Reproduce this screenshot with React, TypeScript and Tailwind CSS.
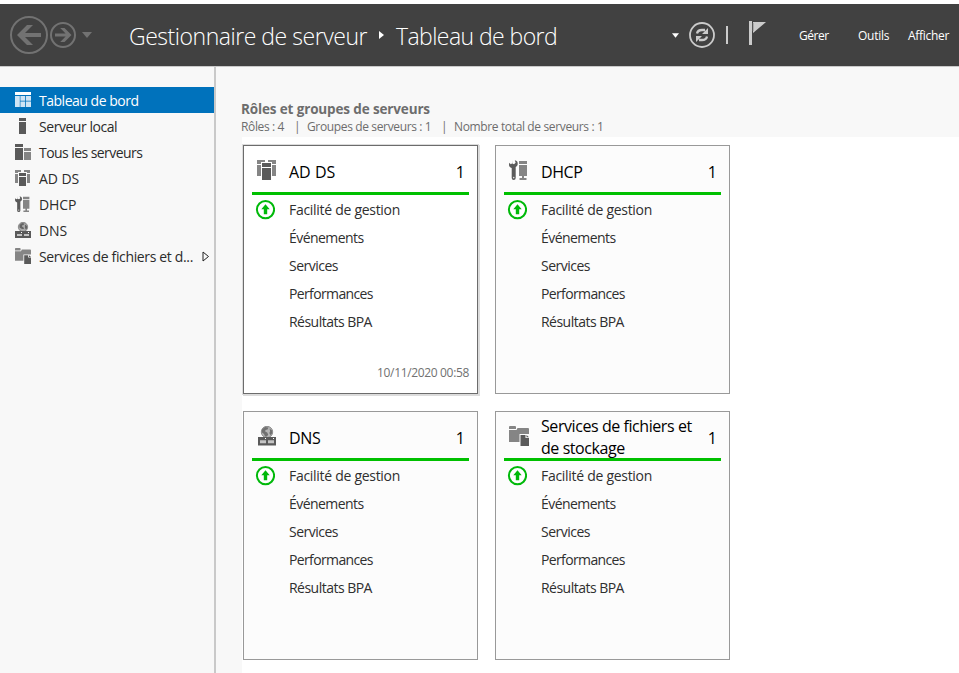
import type { ReactNode } from "react";

type IconProps = { className: string };

function DashboardIcon({ className }: IconProps) {
  return (
    <svg viewBox="0 0 16 16" className={className}>
      <path d="M0 0h16v3H0z" fill="#fff" />
      <path d="M0 4h4.800v11H0zM5.400 4h4.800v4.800H5.400zM5.400 9.600h4.800V15H5.400zM11 4h5v4.800h-5zM11 9.600h5V15h-5z" fill="#cfe4f4" />
    </svg>
  );
}

function LocalServerIcon({ className }: IconProps) {
  return (
    <svg viewBox="0 0 16 16" className={className} shapeRendering="crispEdges">
      <path d="M4 0h7v3H4zM4 4h7v12H4z" fill="#5a5a5a" />
    </svg>
  );
}

function AllServersIcon({ className }: IconProps) {
  return (
    <svg viewBox="0 0 16 16" className={className} shapeRendering="crispEdges">
      <path d="M0 0h8v3H0zM0 4h8v12H0z" fill="#5a5a5a" />
      <path d="M9 4h7v3H9zM9 8h7v8H9z" fill="#858585" />
    </svg>
  );
}

function SmallAdIcon({ className }: IconProps) {
  return (
    <svg viewBox="0 0 16 16" className={className} shapeRendering="crispEdges">
      <path d="M0 0h6v2H3v1H0zM0 4h3v9H0zM9 0h6v3h-3V2H9zM12 4h3v9h-3z" fill="#858585" />
      <path d="M4 3h7v3H4zM4 7h7v9H4z" fill="#5a5a5a" />
    </svg>
  );
}

function AdIcon({ className }: IconProps) {
  return (
    <svg viewBox="0 0 20 20" className={className} shapeRendering="crispEdges">
      <path d="M0 0h8v2H4v2H0zM0 5h4v11H0zM11 0h8v4h-4V2h-4zM15 5h4v11h-4z" fill="#858585" />
      <path d="M5 3h9v4H5zM5 8h9v12H5z" fill="#5a5a5a" />
    </svg>
  );
}

function DhcpIcon({ className }: IconProps) {
  return (
    <svg viewBox="0 0 20 20" className={className}>
      <path d="M10 1h8v3h-8zM10 5h8v11h-8zM13 16h2v2h-2zM10.500 18h7v2h-7z" fill="#858585" />
      <path
        d="M3.200 0v3.400l1.800.8 1.600-1.400L5.800.3C8 .6 9 2.300 8.700 4.300 8.500 5.600 7.700 6.500 6.700 6.900V18a2 2 0 0 1-4 0V8C1 7.600 0 6.300 0 4.700 0 4 .2 3.300.5 2.800l1.200 1.400L3 3.400z"
        fill="#5a5a5a"
      />
      <circle cx="4.700" cy="17.600" r=".8" fill="#ddd" />
    </svg>
  );
}

function DnsIcon({ className }: IconProps) {
  return (
    <svg viewBox="0 0 20 20" className={className}>
      <circle cx="10" cy="6" r="5.700" fill="#b5b5b5" stroke="#777" strokeWidth=".8" />
      <path d="M5 3.500 8 1l3.500.4-1 2-2 .6-.3 1.600 2 .8 1 2-1.200 2.200H8L7 8 5 6.500zM12.500 2.500l2.500 2v3l-1.500 1.800L12.300 7l.9-1.800z" fill="#707070" />
      <path d="M1 11h18v8.500H1z" fill="#5a5a5a" />
      <path d="M3 14.200h6v3H3zM11 14.200h6v3h-6z" fill="#c4c4c4" />
      <path d="M8 12h1v1H8zM16 12h1v1h-1z" fill="#fff" />
    </svg>
  );
}

function SmallDnsIcon({ className }: IconProps) {
  return (
    <svg viewBox="0 0 16 16" className={className}>
      <circle cx="8" cy="5" r="4.700" fill="#aaa" stroke="#707070" strokeWidth=".7" />
      <path d="M4.500 3 7 1l2.500.4-1 1.600-1.500.6v1l1.500.8.500 1.600H7L4.500 5.500zM10 2.500l2 1.500v2.500l-1.200 1L10 6z" fill="#666" />
      <path d="M0 9h16v7H0z" fill="#5a5a5a" />
      <path d="M2 12h5v2H2zM9 12h5v2H9z" fill="#c4c4c4" />
      <path d="M6 10h1v1H6zM13 10h1v1h-1z" fill="#fff" />
    </svg>
  );
}

function FilesIcon({ className }: IconProps) {
  return (
    <svg viewBox="0 0 20 20" className={className}>
      <path d="M0 1q0-1 1-1h5q1 0 1 1v2H0zM0 4h7.500l1-2H19q1 0 1 1v5H10.500v8H0z" fill="#858585" />
      <path d="M11.500 9h5v3H20v8h-8.500z" fill="#5a5a5a" />
      <path d="M17.500 9 20 11.200h-2.500z" fill="#5a5a5a" />
    </svg>
  );
}

function StatusIcon() {
  return (
    <svg viewBox="0 0 20 20" className="h-5 w-5">
      <circle cx="10.500" cy="9.600" r="8.600" fill="#fff" stroke="#00b90a" strokeWidth="2" />
      <path d="M10.500 4.300 14.700 9.300h-2.500v5h-3.400v-5H6.300z" fill="#00b90a" />
    </svg>
  );
}

function Header() {
  return (
    <header className="flex h-[62px] shrink-0 items-center bg-[#414141] text-white">
      <svg viewBox="0 0 96 40" className="ml-[9px] h-10 w-24" fill="none" stroke="#727272">
        <circle cx="20" cy="20" r="18" strokeWidth="2" />
        <path d="M8 20l10-10h6l-8 8h16v4H16l8 8h-6z" fill="#727272" stroke="none" />
        <circle cx="54" cy="20" r="12" strokeWidth="2" />
        <path d="M62.500 20l-7 7h-4.300l5.400-5.600H46v-2.800h10.600L51.200 13h4.300z" fill="#727272" stroke="none" />
        <path d="M73 17h10l-5 6z" fill="#727272" stroke="none" />
      </svg>
      <div className="ml-[24px] flex items-center pt-px text-[23px] leading-[32px] font-light whitespace-nowrap">
        <span className="w-[239px] tracking-[-0.47px]">Gestionnaire de serveur</span>
        <svg viewBox="0 0 5 8" className="mb-px ml-[11px] h-2 w-[5px]">
          <path d="M0 0l5 4-5 4z" fill="#fff" />
        </svg>
        <span className="ml-[12px] w-[162px] tracking-[-0.57px]">Tableau de bord</span>
      </div>
      <svg viewBox="0 0 8 5" className="ml-[114px] h-[5px] w-[7px]">
        <path d="M0 0h8L4 5z" fill="#fff" />
      </svg>
      <svg viewBox="0 0 26 26" className="ml-[10px] h-[26px] w-[26px]" fill="none" stroke="#cbcbcb">
        <circle cx="13" cy="13" r="12" strokeWidth="1.800" />
        <path d="M8 11.500C8.500 9 10.500 8 13 8h3M18 14.500C17.500 17 15.500 18 13 18h-3" strokeWidth="2.300" />
        <path d="M19 6v6h-6zM7 20v-6h6z" fill="#cbcbcb" stroke="none" />
      </svg>
      <div className="ml-[11px] h-[18px] w-[2px] bg-[#cbcbcb]" />
      <svg viewBox="0 0 18 24" className="mb-[4px] ml-[21px] h-6 w-[18px]">
        <path d="M0 0h3v24H0zM4 1h13L4 12z" fill="#cbcbcb" />
        <path d="M4 2v8" stroke="#777" strokeWidth=".8" />
      </svg>
      <nav className="ml-[32px] flex pt-px text-[12px] leading-4 whitespace-nowrap">
        <span className="w-[59px] tracking-[-0.45px]">Gérer</span>
        <span className="w-[50px] tracking-[-0.28px]">Outils</span>
        <span className="tracking-[-0.3px]">Afficher</span>
      </nav>
    </header>
  );
}

const navItems = [
  { label: "Serveur local", icon: LocalServerIcon, tracking: "tracking-[-0.45px]" },
  { label: "Tous les serveurs", icon: AllServersIcon, tracking: "tracking-[-0.56px]" },
  { label: "AD DS", icon: SmallAdIcon, tracking: "tracking-[-0.05px]" },
  { label: "DHCP", icon: DhcpIcon, tracking: "tracking-[-0.1px]" },
  { label: "DNS", icon: SmallDnsIcon, tracking: "tracking-[-0.1px]" },
];

function NavRow({ icon, children }: { icon: ReactNode; children: ReactNode }) {
  return (
    <li className="flex h-[26px] items-center pl-[15px] whitespace-nowrap">
      <span className="mr-2 flex">{icon}</span>
      {children}
    </li>
  );
}

function Sidebar() {
  return (
    <aside className="w-[216px] shrink-0 border-r-2 border-[#c9c9c9] bg-[#f8f8f8] pt-5">
      <ul className="text-[14px] leading-[24px] text-[#2b2b2b]">
        <li className="flex h-[26px] items-center bg-[#0072bc] pl-[15px] whitespace-nowrap text-white">
          <DashboardIcon className="mr-2 h-4 w-4" />
          <span className="pt-[2px] tracking-[-0.48px]">Tableau de bord</span>
        </li>
        {navItems.map(({ label, icon: Icon, tracking }) => (
          <NavRow key={label} icon={<Icon className="h-4 w-4" />}>
            <span className={`pt-[2px] ${tracking}`}>{label}</span>
          </NavRow>
        ))}
        <NavRow icon={<FilesIcon className="h-4 w-4" />}>
          <span className="w-[155px] pt-[2px] tracking-[-0.35px]">Services de fichiers et d...</span>
          <svg viewBox="0 0 8 11" className="ml-[8px] h-[11px] w-2" fill="none" stroke="#222">
            <path d="M1 1 6.500 5.500 1 10z" />
          </svg>
        </NavRow>
      </ul>
    </aside>
  );
}

const metrics = [
  { label: "Facilité de gestion", tracking: "tracking-[-0.29px]", ok: true },
  { label: "Événements", tracking: "tracking-[-0.55px]" },
  { label: "Services", tracking: "tracking-[-0.5px]" },
  { label: "Performances", tracking: "tracking-[-0.63px]" },
  { label: "Résultats BPA", tracking: "tracking-[-0.52px]" },
];

type CardProps = { title: string; icon: ReactNode; titleClass: string; date?: string };

function RoleCard({ title, icon, titleClass, date }: CardProps) {
  return (
    <section
      className={
        date
          ? "flex h-[249px] w-[235px] flex-col border border-[#6c6c6c] bg-white px-2 shadow-[0_0_0_1px_#dcdcdc,1px_1px_0_1px_#dcdcdc]"
          : "flex h-[249px] w-[235px] flex-col border border-[#999] bg-[#fcfcfc] px-2"
      }
    >
      <div className="flex h-[46px] items-center">
        <span className="w-[37px] pt-[2px] pl-[5px]">{icon}</span>
        <h2 className={`w-[160px] text-[16px] leading-[22px] text-black ${titleClass}`}>{title}</h2>
        <span className="w-[16px] pt-[5px] text-right text-[16px] leading-[22px] text-black">1</span>
      </div>
      <div className="h-[3px] shrink-0 bg-[#00c000]" />
      <ul className="mt-px text-[14px] leading-[28px] text-[#2f2f2f]">
        {metrics.map((m) => (
          <li key={m.label} className="flex h-7 items-center">
            <span className="flex w-[37px] pl-[3px]">{m.ok && <StatusIcon />}</span>
            <span className={m.tracking}>{m.label}</span>
          </li>
        ))}
      </ul>
      {date && (
        <time className="mt-auto pb-[12px] text-right text-[12px] leading-4 tracking-[-0.34px] text-[#717171]">
          {date}
        </time>
      )}
    </section>
  );
}

export default function App() {
  return (
    <div className="flex h-[673px] w-[959px] flex-col overflow-hidden bg-white pt-1 font-['Open_Sans',sans-serif]">
      <Header />
      <div className="flex min-h-0 flex-1 border-t border-[#c9c9c9]">
        <Sidebar />
        <main className="flex flex-1 flex-col bg-[#f8f8f8] pl-[26px]">
          <div className="-ml-px h-[70px] shrink-0 pt-[33px] whitespace-nowrap text-[#6d6d6d]">
            <h1 className="text-[13.5px] leading-[18px] font-bold tracking-[-0.14px]">Rôles et groupes de serveurs</h1>
            <div className="flex text-[12px] leading-[17px] tracking-[-0.36px]">
              <span className="w-[53px]">Rôles : 4</span>
              <span className="w-[13px]">|</span>
              <span className="w-[134px]">Groupes de serveurs : 1</span>
              <span className="w-[13px]">|</span>
              <span>Nombre total de serveurs : 1</span>
            </div>
          </div>
          <div className="flex-1 bg-white pt-2 pl-px">
            <div className="grid grid-cols-[235px_235px] gap-[17px]">
              <RoleCard title="AD DS" titleClass="pt-[5px]" icon={<AdIcon className="h-5 w-5" />} date="10/11/2020 00:58" />
              <RoleCard title="DHCP" titleClass="pt-[5px] tracking-[-0.4px]" icon={<DhcpIcon className="h-5 w-5" />} />
              <RoleCard title="DNS" titleClass="pt-[5px] tracking-[-0.3px]" icon={<DnsIcon className="h-5 w-5" />} />
              <RoleCard
                title="Services de fichiers et de stockage"
                titleClass="pt-[4px] tracking-[-0.43px]"
                icon={<FilesIcon className="h-5 w-5" />}
              />
            </div>
          </div>
        </main>
      </div>
    </div>
  );
}
